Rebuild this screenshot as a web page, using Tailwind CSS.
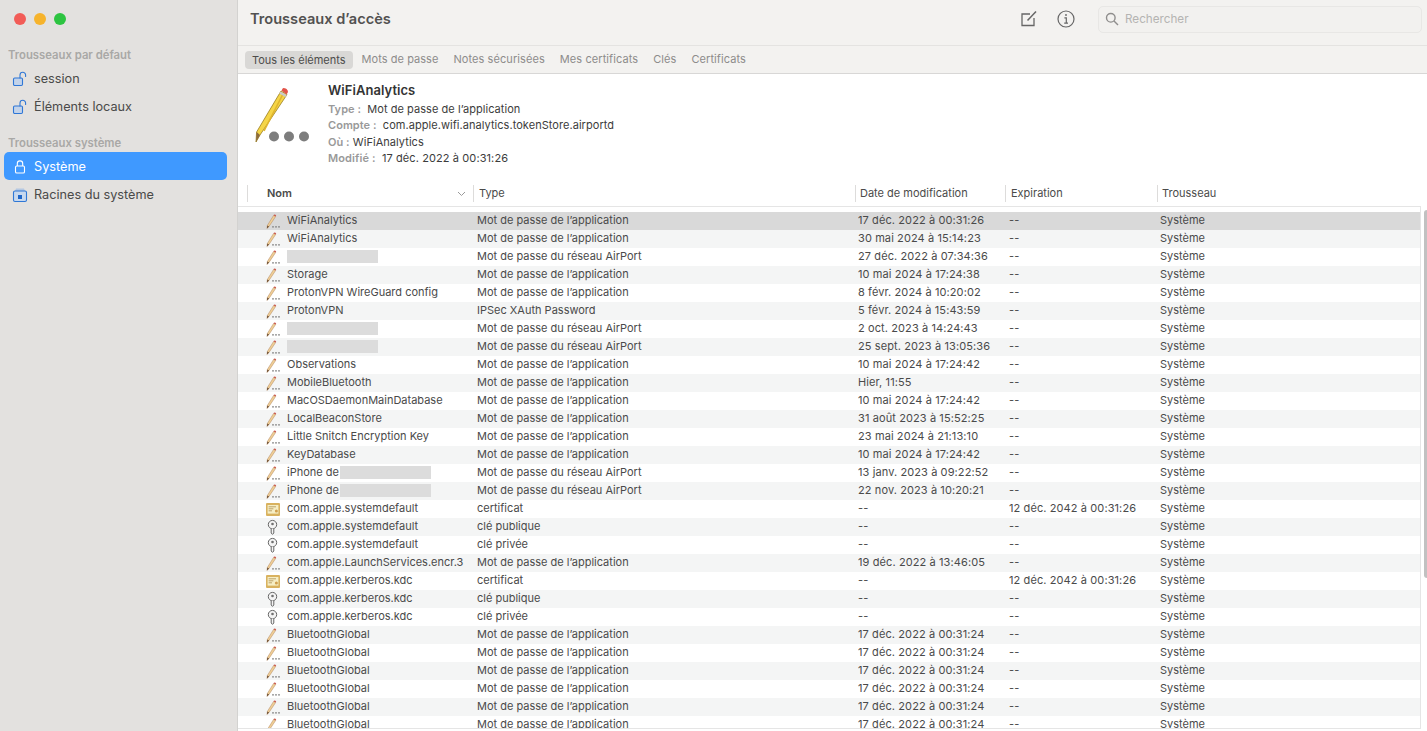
<!DOCTYPE html>
<html lang="fr">
<head>
	<meta charset="UTF-9">
	<title>Trousseaux d'accès</title>
	<script src="https://cdn.jsdelivr.net/npm/@tailwindcss/browser@4"></script>
</head>

<body class="h-screen overflow-hidden bg-white font-['Inter','Liberation_Sans',sans-serif] text-[#3c3c3c]">
	<!-- shared icons -->
	<svg class="hidden">
		<symbol id="pencil" viewBox="0 0 16 18">
			<path d="M8.6 3.4 L10.6 4.6 L4 14.4 L2 16.4 L2.4 13.4 Z" fill="#f0cf95" stroke="#b0825a" stroke-width=".5"/>
			<path d="M8.6 3.4 L9.2 2.6 Q10.8 2.6 11.2 3.8 L10.6 4.6 Z" fill="#c9564a"/>
			<path d="M2.4 13.4 L2 16.4 L4 14.4 Z" fill="#5f4229"/>
			<circle cx="8" cy="14.8" r=".9" fill="#858585"/>
			<circle cx="11" cy="14.8" r=".9" fill="#858585"/>
			<circle cx="14" cy="14.8" r=".9" fill="#858585"/>
		</symbol>
		<symbol id="cert" viewBox="0 0 16 18">
			<rect x="1" y="3" width="14" height="13" rx="1" fill="#d9b25f"/>
			<rect x="2.6" y="5" width="10.8" height="8.6" fill="#f6eec4"/>
			<path d="M3.6 6.8 H11 M3.6 8.8 H8.4 M3.6 10.8 H7" stroke="#b59a62" stroke-width=".9"/>
			<circle cx="11.4" cy="11" r="1.5" fill="#d0a04f"/>
		</symbol>
		<symbol id="key" viewBox="0 0 16 18">
			<circle cx="7.5" cy="6.6" r="4.2" fill="#f4f4f4" stroke="#666" stroke-width="1"/>
			<circle cx="7.5" cy="6" r="1.3" fill="#707070"/>
			<path d="M6.2 10.8 V15 L7.5 16.4 L8.8 15 V10.8" fill="#f4f4f4" stroke="#666" stroke-width="1"/>
		</symbol>
		<symbol id="open-lock" viewBox="0 0 16 16">
			<rect x="1.5" y="7" width="9" height="7.5" rx="1.2" fill="#c3d3ea" stroke="#2f77d6" stroke-width="1.1"/>
			<path d="M8 7 V4 a2.8 2.8 0 0 1 5.6 0 V5.4" fill="none" stroke="#2f77d6" stroke-width="1.1" stroke-linecap="round"/>
		</symbol>
	</svg>

	<div class="flex h-full">
		<!-- sidebar -->
		<div class="w-[238px] shrink-0 bg-[#e3e1df] border-r border-[#d3d2d0] pl-1 pr-[10px]">
			<div class="flex gap-2 h-[38px] pt-[13px] pl-[10px]">
				<span class="w-3 h-3 rounded-full bg-[#f25c57]"></span>
				<span class="w-3 h-3 rounded-full bg-[#f6b32c]"></span>
				<span class="w-3 h-3 rounded-full bg-[#2dc441]"></span>
			</div>
			<div class="h-[12px] mt-[11px] pl-1 text-[11.3px] leading-3 font-semibold text-[#a9a8a6]">Trousseaux par défaut</div>
			<div class="flex items-center h-7 mt-[3px] pl-2 pt-[2px] gap-[6px] text-[12.7px] text-[#4a4a49]">
				<svg class="w-4 h-4" viewBox="0 0 16 16"><use href="#open-lock"/></svg>session
			</div>
			<div class="flex items-center h-7 pl-2 pt-[2px] gap-[6px] text-[12.7px] text-[#4a4a49]">
				<svg class="w-4 h-4" viewBox="0 0 16 16"><use href="#open-lock"/></svg>Éléments locaux
			</div>
			<div class="h-[12px] mt-[17px] pl-1 text-[11.3px] leading-3 font-semibold text-[#a9a8a6]">Trousseaux système</div>
			<div class="flex items-center h-7 mt-[3px] pl-2 pt-[2px] gap-[6px] text-[12.7px] text-white bg-[#3f99ff] rounded-[5px]">
				<svg class="w-4 h-4" viewBox="0 0 16 16"><rect x="3.5" y="7" width="9" height="7" rx="1.3" fill="none" stroke="#fff" stroke-width="1.1"/><path d="M5.3 7 V4.6 a2.7 2.7 0 0 1 5.4 0 V7" fill="none" stroke="#fff" stroke-width="1.1"/></svg>Système
			</div>
			<div class="flex items-center h-7 pl-2 pt-[2px] gap-[6px] text-[12.7px] text-[#4a4a49]">
				<svg class="w-4 h-4" viewBox="0 0 16 16"><path d="M4 1.5 H12 L13 4 H3 Z" fill="#b5c8e2"/><rect x="1.5" y="4" width="13" height="10.5" rx="1.5" fill="#c7d8ee" stroke="#2f77d6" stroke-width="1.1"/><rect x="6" y="8" width="4" height="4" fill="#1f66c8"/></svg>Racines du système
			</div>
		</div>

		<!-- main column -->
		<div class="flex-1 min-w-0 flex flex-col">
			<div class="h-[46px] shrink-0 flex items-center bg-[#f3f2f0] border-b border-[#e4e3e1] pl-3 pb-[7px]">
				<h1 class="mt-[2px] text-[14.6px] font-semibold text-[#525150]">Trousseaux d’accès</h1>
				<svg class="ml-auto w-[18px] h-[18px]" viewBox="0 0 18 18" fill="none" stroke="#666" stroke-width="1.3"><path d="M14 8 V15.5 H2 V4 H10"/><path d="M7.5 10.5 L16 1.5" stroke-width="1.5"/></svg>
				<svg class="ml-[19px] w-[18px] h-[18px]" viewBox="0 0 18 18" fill="none" stroke="#666" stroke-width="1.2"><circle cx="9" cy="9" r="8"/><circle cx="9" cy="5" r=".9" fill="#666" stroke="none"/><path d="M7.4 7.8 H9.3 V13 M7.2 13.2 H11"/></svg>
				<div class="ml-[23px] mr-[5px] w-[324px] h-[27px] flex items-center pl-[6px] gap-[6px] bg-[#f2f1ef] border border-[#e8e7e5] rounded-[5px] text-[11.7px] text-[#b5b4b2]">
					<svg class="w-[14px] h-[14px]" viewBox="0 0 14 14" fill="none" stroke="#8f8e8d" stroke-width="1.4"><circle cx="5.8" cy="5.8" r="4.3"/><path d="M9 9 L13 13"/></svg>
					<span class="mt-[2px]">Rechercher</span>
				</div>
			</div>

			<div class="h-[28px] shrink-0 flex items-center gap-[1px] bg-[#f3f2f0] border-b border-[#d8d7d6] pl-[7px] text-[11px] text-[#8d8c8b]">
				<span class="h-[18px] leading-[18px] px-[7px] rounded-[4px] bg-[#d9d8d6] text-[#4d4c4b]">Tous les éléments</span>
				<span class="ml-[1px] px-[7px] tracking-[0.05px]">Mots de passe</span>
				<span class="px-[7px] tracking-[0.08px]">Notes sécurisées</span>
				<span class="px-[7px] tracking-[0.08px]">Mes certificats</span>
				<span class="px-[7px] tracking-[0.08px]">Clés</span>
				<span class="px-[7px] tracking-[0.08px]">Certificats</span>
			</div>

			<div class="h-[106px] shrink-0 flex pl-[14px] pt-[13px]">
				<svg class="w-[60px] h-[60px] shrink-0" viewBox="0 0 60 60">
					<path d="M29 4 L35 7.6 L8 48 L4 55 L4.6 45 Z" fill="#f5d547" stroke="#9a7d1e" stroke-width=".8"/>
					<path d="M31 7 L12 44" stroke="#e0b52e" stroke-width="1.6"/>
					<path d="M29.5 3.4 L31 1 Q35.6 1 36 5 L34.6 7.4 Z" fill="#e2544a"/>
					<path d="M28.6 4.4 L34.8 8 L33.4 10 L27.2 6.4 Z" fill="#c9c9c9"/>
					<path d="M4.6 45 L4 55 L8 48 Z" fill="#8c6b3e"/>
					<circle cx="22" cy="49.5" r="5" fill="#7d7d7d"/><circle cx="37" cy="49.5" r="5" fill="#7d7d7d"/><circle cx="52" cy="49.5" r="5" fill="#7d7d7d"/>
				</svg>
				<div class="ml-[16px] text-[11px] leading-[16.5px] tracking-[0.05px]">
					<div class="h-[17px] -mt-[5px] mb-[1.5px] text-[13px] font-semibold text-[#333]">WiFiAnalytics</div>
					<div><b class="font-semibold text-[#999]">Type :</b>&nbsp; Mot de passe de l’application</div>
					<div><b class="font-semibold text-[#999]">Compte :</b>&nbsp; com.apple.wifi.analytics.tokenStore.airportd</div>
					<div><b class="font-semibold text-[#999]">Où :</b>&nbsp;WiFiAnalytics</div>
					<div class="tracking-[0.1px]"><b class="font-semibold text-[#999]">Modifié :</b>&nbsp; 17 déc. 2022 à 00:31:26</div>
				</div>
			</div>

			<!-- column headers -->
			<div class="h-[26px] shrink-0 flex items-center text-[11px] text-[#4b4b4a]">
				<div class="w-[227px] h-[17px] ml-[9px] flex items-center justify-between border-l border-r border-[#dddcdb] pl-[19px] pr-[7px] font-semibold">
					Nom
					<svg class="w-[9px] h-[9px]" viewBox="0 0 9 9" fill="none" stroke="#9a9a9a" stroke-width="1"><path d="M1 3 L4.5 6.5 L8 3"/></svg>
				</div>
				<div class="w-[382px] h-[17px] leading-[17px] border-r border-[#dddcdb] pl-[5px]">Type</div>
				<div class="w-[150px] h-[17px] leading-[17px] border-r border-[#dddcdb] pl-[4px]">Date de modification</div>
				<div class="w-[152px] h-[17px] leading-[17px] border-r border-[#dddcdb] pl-[5px]">Expiration</div>
				<div class="pl-[4px]">Trousseau</div>
			</div>

			<!-- table -->
			<div class="flex-1 min-h-0 flex mb-[2px]">
				<div id="rows" class="w-[1183px] overflow-hidden pt-[5px] border-t border-r border-b border-[#e5e5e5] text-[11px] text-[#4a4a4a]"></div>
				<div class="ml-[3px] mt-[4px] w-[3px] h-[368px] bg-[#c1c1c1] rounded-l-sm"></div>
			</div>
		</div>
	</div>

	<script>
		const AP = "Mot de passe de l’application";
		const WIFI = "Mot de passe du réseau AirPort";
		// icon, name, hidden block, type, date, expiry
		const data = [
			["pencil", "WiFiAnalytics", "", AP, "17 déc. 2022 à 00:31:26", "--"],
			["pencil", "WiFiAnalytics", "", AP, "30 mai 2024 à 15:14:23", "--"],
			["pencil", "", "w", WIFI, "27 déc. 2022 à 07:34:36", "--"],
			["pencil", "Storage", "", AP, "10 mai 2024 à 17:24:38", "--"],
			["pencil", "ProtonVPN WireGuard config", "", AP, "8 févr. 2024 à 10:20:02", "--"],
			["pencil", "ProtonVPN", "", "IPSec XAuth Password", "5 févr. 2024 à 15:43:59", "--"],
			["pencil", "", "w", WIFI, "2 oct. 2023 à 14:24:43", "--"],
			["pencil", "", "w", WIFI, "25 sept. 2023 à 13:05:36", "--"],
			["pencil", "Observations", "", AP, "10 mai 2024 à 17:24:42", "--"],
			["pencil", "MobileBluetooth", "", AP, "Hier, 11:55", "--"],
			["pencil", "MacOSDaemonMainDatabase", "", AP, "10 mai 2024 à 17:24:42", "--"],
			["pencil", "LocalBeaconStore", "", AP, "31 août 2023 à 15:52:25", "--"],
			["pencil", "Little Snitch Encryption Key", "", AP, "23 mai 2024 à 21:13:10", "--"],
			["pencil", "KeyDatabase", "", AP, "10 mai 2024 à 17:24:42", "--"],
			["pencil", "iPhone de", "p", WIFI, "13 janv. 2023 à 09:22:52", "--"],
			["pencil", "iPhone de", "p", WIFI, "22 nov. 2023 à 10:20:21", "--"],
			["cert", "com.apple.systemdefault", "", "certificat", "--", "12 déc. 2042 à 00:31:26"],
			["key", "com.apple.systemdefault", "", "clé publique", "--", "--"],
			["key", "com.apple.systemdefault", "", "clé privée", "--", "--"],
			["pencil", "com.apple.LaunchServices.encr.3", "", AP, "19 déc. 2022 à 13:46:05", "--"],
			["cert", "com.apple.kerberos.kdc", "", "certificat", "--", "12 déc. 2042 à 00:31:26"],
			["key", "com.apple.kerberos.kdc", "", "clé publique", "--", "--"],
			["key", "com.apple.kerberos.kdc", "", "clé privée", "--", "--"],
			["pencil", "BluetoothGlobal", "", AP, "17 déc. 2022 à 00:31:24", "--"],
			["pencil", "BluetoothGlobal", "", AP, "17 déc. 2022 à 00:31:24", "--"],
			["pencil", "BluetoothGlobal", "", AP, "17 déc. 2022 à 00:31:24", "--"],
			["pencil", "BluetoothGlobal", "", AP, "17 déc. 2022 à 00:31:24", "--"],
			["pencil", "BluetoothGlobal", "", AP, "17 déc. 2022 à 00:31:24", "--"],
			["pencil", "BluetoothGlobal", "", AP, "17 déc. 2022 à 00:31:24", "--"]
		];

		let html = "";
		data.forEach((r, i) => {
			const bg = i === 0 ? "bg-[#d9d9d9]" : i % 2 ? "bg-[#f4f5f5]" : "bg-white";
			let hidden = "";
			if (r[2] === "w") hidden = '<span class="w-[91px] h-[13px] bg-[#dcdcdc]"></span>';
			if (r[2] === "p") hidden = '<span class="ml-[1px] w-[91px] h-[13px] bg-[#dcdcdc]"></span>';
			html += '<div class="flex items-center h-[18px] ' + bg + '">'
				+ '<svg class="ml-[27px] w-[16px] h-[18px] shrink-0"><use href="#' + r[0] + '"/></svg>'
				+ '<div class="ml-[6px] w-[190px] shrink-0 -mt-[2px] flex items-center whitespace-nowrap">' + r[1] + hidden + '</div>'
				+ '<div class="w-[381px] shrink-0 -mt-[2px]">' + r[3] + '</div>'
				+ '<div class="w-[151px] shrink-0 -mt-[2px] tracking-[0.1px]">' + r[4] + '</div>'
				+ '<div class="w-[151px] shrink-0 -mt-[2px] tracking-[0.1px]">' + r[5] + '</div>'
				+ '<div class="-mt-[2px]">Système</div></div>';
		});
		document.getElementById("rows").innerHTML = html;
	</script>
</body>

</html>
